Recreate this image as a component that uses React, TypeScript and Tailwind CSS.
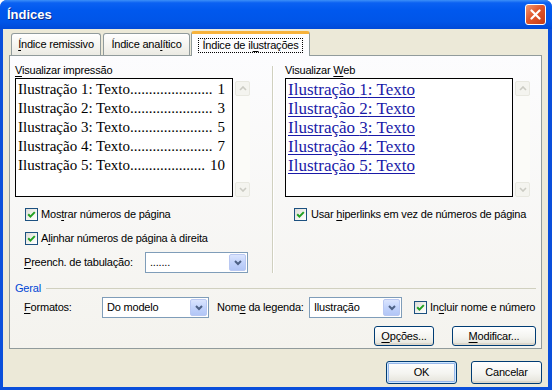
import React from 'react';

const U: React.FC<{ children: React.ReactNode }> = ({ children }) => (
  <span className="underline underline-offset-[2px] decoration-1">{children}</span>
);

const CheckBox: React.FC = () => (
  <div className="w-[13px] h-[13px] shrink-0 border border-[#1c5180] bg-[linear-gradient(135deg,#dcdcd7,#f3f3ef_55%,#ffffff)] flex items-center justify-center">
    <svg width="11" height="11" viewBox="0 0 11 11">
      <polyline points="2.2,5.3 4.4,7.6 8.8,3.1" fill="none" stroke="#21a121" strokeWidth="2" />
    </svg>
  </div>
);

const Combo: React.FC<{ value: string; className: string }> = ({ value, className }) => (
  <div className={`h-[21px] shrink-0 border border-[#7f9db9] bg-white flex items-center p-px ${className}`}>
    <span className="flex-1 pl-[3px] whitespace-nowrap">{value}</span>
    <div className="w-[17px] h-full rounded-[2px] border border-[#b9c8f2] bg-[linear-gradient(to_bottom,#dbe5fe,#c2d3fb_50%,#b2c6f6)] flex items-center justify-center">
      <svg width="8" height="6" viewBox="0 0 8 6">
        <polyline points="1,1 4,4 7,1" fill="none" stroke="#4d6185" strokeWidth="2" />
      </svg>
    </div>
  </div>
);

const Arrow: React.FC<{ up?: boolean }> = ({ up }) => (
  <div className="w-[15px] h-[15px] rounded-[2px] border border-[#e8e8e0] bg-[#f4f4ef] flex items-center justify-center">
    <svg width="8" height="5" viewBox="0 0 8 5">
      <polyline points={up ? '1,4 4,1 7,4' : '1,1 4,4 7,1'} fill="none" stroke="#cbcbc3" strokeWidth="1.6" />
    </svg>
  </div>
);

const ScrollBar: React.FC = () => (
  <div className="w-[15px] ml-[2px] mt-[3px] flex flex-col justify-between bg-[#fbfbf8]">
    <Arrow up />
    <Arrow />
  </div>
);

const Btn: React.FC<{ children: React.ReactNode; className: string; def?: boolean }> = ({ children, className, def }) => (
  <div
    className={`shrink-0 rounded-[3px] border border-[#003c74] bg-[linear-gradient(to_bottom,#ffffff,#f4f4f0_55%,#e4e2d9)] flex items-center justify-center ${
      def ? 'shadow-[inset_0_0_0_1px_#cee7ff,inset_0_0_0_2px_#98b8ea]' : 'shadow-[inset_0_-2px_0_#dcd7cc]'
    } ${className}`}
  >
    {children}
  </div>
);

// label number, page number, leader dots
const preview: [string, string, string][] = [
  ['1', '1', '......................'],
  ['2', '3', '......................'],
  ['3', '5', '......................'],
  ['4', '7', '......................'],
  ['5', '10', '....................'],
];

export default function App() {
  return (
    <div className="w-[552px] h-[390px] overflow-hidden rounded-t-[7px] bg-[#0a4fdb] flex flex-col font-['Liberation_Sans',Arial,sans-serif] text-[11px] tracking-[-0.2px] text-black">
      {/* title bar */}
      <div className="h-[29px] shrink-0 flex items-center justify-between pl-[7px] pr-[6px] bg-[linear-gradient(to_bottom,#3c8ff8_0%,#0b61f2_10%,#0058ee_35%,#0055e8_75%,#004ad8_100%)]">
        <span className="text-white font-bold text-[13px] tracking-normal [text-shadow:1px_1px_0_#0a2a8a]">Índices</span>
        <div className="w-[21px] h-[21px] rounded-[3px] border border-white bg-[linear-gradient(135deg,#f19a74,#e0562c_45%,#c43b16)] flex items-center justify-center">
          <svg width="11" height="11" viewBox="0 0 11 11">
            <path d="M1.5 1.5 L9.5 9.5 M9.5 1.5 L1.5 9.5" stroke="white" strokeWidth="2.2" strokeLinecap="round" />
          </svg>
        </div>
      </div>

      {/* client */}
      <div className="flex-1 flex flex-col bg-[#ece9d8] ml-[3px] mr-[4px] mb-[3px] pl-[6px]">
        {/* tabs */}
        <div className="h-[26px] shrink-0 flex items-end">
          <div className="ml-[2px] w-[90px] h-[22px] rounded-t-[3px] border border-b-0 border-[#919b9c] bg-[linear-gradient(to_bottom,#ffffff,#f4f3ee_60%,#ebeae3)] flex items-center justify-center">
            <span><U>Í</U>ndice remissivo</span>
          </div>
          <div className="ml-[2px] w-[87px] h-[22px] rounded-t-[3px] border border-b-0 border-[#919b9c] bg-[linear-gradient(to_bottom,#ffffff,#f4f3ee_60%,#ebeae3)] flex items-center justify-center">
            <span>Índice ana<U>l</U>ítico</span>
          </div>
          <div className="relative z-10 -mb-px ml-[1px] w-[119px] h-[25px] rounded-t-[3px] border border-b-0 border-t-[3px] border-[#919b9c] border-t-[#f7b23b] bg-[#fcfcfe] flex items-center justify-center">
            <span className="border border-dotted border-black px-[3px] leading-[13px]">Índice de il<U>u</U>strações</span>
          </div>
        </div>

        {/* panel */}
        <div className="relative w-[533px] h-[294px] shrink-0 border border-[#919b9c] bg-[linear-gradient(to_bottom,#fcfcfe,#f4f3ee)] pt-[7px] pl-[5px] pr-[5px] flex flex-col">
          <div className="flex">
            {/* left column */}
            <div className="w-[236px] flex flex-col">
              <div className="h-[14px] leading-[14px]"><U>V</U>isualizar impressão</div>
              <div className="mt-[1px] flex h-[119px]">
                <div className="w-[218px] h-full border border-black bg-white pt-[1px] pl-[2px] pr-[7px] font-['Liberation_Serif','Times_New_Roman',serif] text-[15px] leading-[19px] tracking-normal">
                  {preview.map(([n, p, dots]) => (
                    <div key={n} className="flex justify-between whitespace-nowrap">
                      <span>Ilustração {n}: Texto{dots}</span>
                      <span>{p}</span>
                    </div>
                  ))}
                </div>
                <ScrollBar />
              </div>
              <div className="mt-[10px] h-[14px] flex items-center ml-[10px]">
                <CheckBox />
                <span className="ml-[3px]">Mos<U>t</U>rar números de página</span>
              </div>
              <div className="mt-[10px] h-[14px] flex items-center ml-[10px]">
                <CheckBox />
                <span className="ml-[3px]">A<U>l</U>inhar números de página à direita</span>
              </div>
              <div className="mt-[7px] h-[21px] flex items-center ml-[9px]">
                <span className="w-[121px]"><U>P</U>reench. de tabulação:</span>
                <Combo value="......." className="w-[103px]" />
              </div>
            </div>

            {/* separator */}
            <div className="ml-[21px] mt-[3px] w-[2px] border-l border-[#d0d0bf] bg-white" />

            {/* right column */}
            <div className="ml-[11px] w-[245px] flex flex-col">
              <div className="h-[14px] leading-[14px]">Visualizar <U>W</U>eb</div>
              <div className="mt-[1px] flex h-[119px]">
                <div className="w-[228px] h-full border border-black bg-white pt-[1px] pl-[2px] font-['Liberation_Serif','Times_New_Roman',serif] text-[17px] leading-[19px] tracking-normal text-[#1a1aa8]">
                  {preview.map(([n]) => (
                    <div key={n} className="whitespace-nowrap">
                      <span className="underline underline-offset-[2px]">Ilustração {n}: Texto</span>
                    </div>
                  ))}
                </div>
                <ScrollBar />
              </div>
              <div className="mt-[10px] h-[14px] flex items-center ml-[9px]">
                <CheckBox />
                <span className="ml-[4px]">Usar <U>h</U>iperlinks em vez de números de página</span>
              </div>
            </div>
          </div>

          {/* Geral */}
          <div className="mt-[8px] h-[14px] flex items-center">
            <span className="text-[#0046d5]">Geral</span>
            <div className="flex-1 ml-[5px] h-px bg-[#d0d0bf]" />
          </div>
          <div className="mt-[2px] h-[21px] flex items-center ml-[9px]">
            <span className="w-[78px]"><U>F</U>ormatos:</span>
            <Combo value="Do modelo" className="w-[107px]" />
            <span className="ml-[8px] w-[92px]">Nom<U>e</U> da legenda:</span>
            <Combo value="Ilustração" className="w-[93px]" />
            <div className="ml-[12px]"><CheckBox /></div>
            <span className="ml-[3px]">In<U>c</U>luir nome e número</span>
          </div>
          <div className="mt-[8px] flex justify-end">
            <Btn className="w-[60px] h-[20px]"><U>O</U>pções...</Btn>
            <Btn className="ml-[18px] w-[84px] h-[20px]"><U>M</U>odificar...</Btn>
          </div>
        </div>

        {/* dialog buttons */}
        <div className="mt-[12px] w-[533px] flex justify-end">
          <Btn def className="w-[71px] h-[23px]">OK</Btn>
          <Btn className="ml-[14px] w-[71px] h-[23px]">Cancelar</Btn>
        </div>
      </div>
    </div>
  );
}
